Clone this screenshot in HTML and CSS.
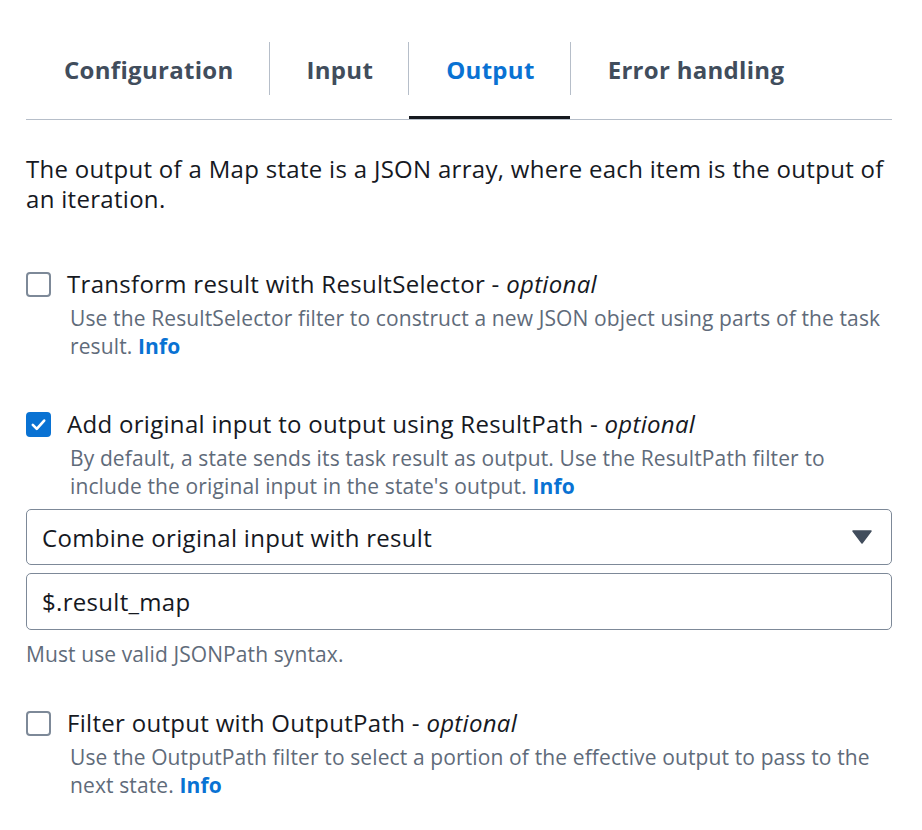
FILE: index.html
```html
<!DOCTYPE html>
<html lang="en">
<head>
<meta charset="utf-8">
<title>Map state output</title>
<link rel="stylesheet" href="styles.css">
</head>
<body>
<div class="panel">
  <div class="tabs">
    <div class="tab"><span class="tab-label">Configuration</span></div>
    <span class="sep"></span>
    <div class="tab"><span class="tab-label">Input</span></div>
    <span class="sep"></span>
    <div class="tab active"><span class="tab-label">Output</span></div>
    <span class="sep"></span>
    <div class="tab"><span class="tab-label">Error handling</span></div>
  </div>

  <p class="intro">The output of a Map state is a JSON array, where each item is the output of an iteration.</p>

  <div class="option first">
    <div class="check-row">
      <span class="box"></span>
      <span class="label">Transform result with ResultSelector - <em>optional</em></span>
    </div>
    <p class="desc">Use the ResultSelector filter to construct a new JSON object using parts of the task result. <a class="info">Info</a></p>
  </div>

  <div class="option">
    <div class="check-row">
      <span class="box checked"><svg viewBox="0 0 24 24" width="24" height="24"><path d="M5.5 12.5 L10 17 L18.5 7.5" fill="none" stroke="#fff" stroke-width="3" stroke-linecap="round" stroke-linejoin="round"/></svg></span>
      <span class="label">Add original input to output using ResultPath - <em>optional</em></span>
    </div>
    <p class="desc">By default, a state sends its task result as output. Use the ResultPath filter to include the original input in the state's output. <a class="info">Info</a></p>
    <div class="select">
      <span>Combine original input with result</span>
      <svg class="caret" viewBox="0 0 20 14" width="20" height="14"><path d="M1 1 H19 L10 13 Z" fill="#414d5c" stroke="#414d5c" stroke-width="1.5" stroke-linejoin="round"/></svg>
    </div>
    <div class="input">$.result_map</div>
    <p class="hint">Must use valid JSONPath syntax.</p>
  </div>

  <div class="option last">
    <div class="check-row">
      <span class="box"></span>
      <span class="label">Filter output with OutputPath - <em>optional</em></span>
    </div>
    <p class="desc">Use the OutputPath filter to select a portion of the effective output to pass to the next state. <a class="info">Info</a></p>
  </div>
</div>
</body>
</html>
```

FILE: styles.css
```css
* { box-sizing: border-box; }
html, body {
  margin: 0;
  padding: 0;
  background: #ffffff;
}
body {
  font-family: "Open Sans", "Noto Sans", sans-serif;
  color: #16191f;
}
.panel {
  padding: 42px 30px 0 26px;
}
.tabs {
  display: flex;
  align-items: flex-start;
  border-bottom: 1px solid #b6bec9;
}
.tab {
  height: 77px;
  padding: 0 35px 0 37px;
}
.tab:first-child {
  padding-left: 38px;
}
.tab-label {
  display: block;
  height: 53px;
  line-height: 55px;
  font-size: 24px;
  letter-spacing: 0.3px;
  font-weight: 700;
  color: #414d5c;
  white-space: nowrap;
}
.tab.active {
  box-shadow: inset 0 -3px 0 #16191f;
}
.tab.active .tab-label {
  color: #0972d3;
}
.sep {
  width: 1px;
  height: 53px;
  background: #b6bec9;
  flex: none;
}
.intro {
  margin: 34px 0 0 0;
  font-size: 24px;
  letter-spacing: 0.3px;
  line-height: 30px;
}
.option {
  margin-top: 49px;
}
.option.first {
  margin-top: 55px;
}
.option.last {
  margin-top: 40px;
}
.check-row {
  display: flex;
  align-items: center;
  gap: 16px;
  height: 30px;
}
.box {
  width: 25px;
  height: 25px;
  border: 2px solid #7d8998;
  border-radius: 4px;
  flex: none;
  display: flex;
  align-items: center;
  justify-content: center;
}
.box.checked {
  background: #0972d3;
  border-color: #0972d3;
}
.box svg { width: 21px; height: 21px; }
.label {
  font-size: 24px;
  letter-spacing: 0.3px;
  line-height: 30px;
  white-space: nowrap;
}
.label em { font-style: italic; }
.desc {
  margin: 5px 0 0 44px;
  font-size: 21px;
  letter-spacing: 0.12px;
  line-height: 28px;
  color: #5f6b7a;
}
.info {
  color: #0972d3;
  font-weight: 700;
}
.select {
  margin-top: 9px;
  height: 56px;
  border: 1.5px solid #7d8998;
  border-radius: 5px;
  display: flex;
  align-items: center;
  justify-content: space-between;
  padding: 0 19px 0 15px;
  font-size: 24px;
  letter-spacing: 0.3px;
}
.caret { flex: none; }
.input {
  margin-top: 8px;
  height: 57px;
  border: 1.5px solid #7d8998;
  border-radius: 5px;
  display: flex;
  align-items: center;
  padding: 0 15px;
  font-size: 24px;
  letter-spacing: 0.3px;
}
.hint {
  margin: 10px 0 0 0;
  font-size: 21px;
  letter-spacing: 0.1px;
  line-height: 28px;
  color: #5f6b7a;
}
```
